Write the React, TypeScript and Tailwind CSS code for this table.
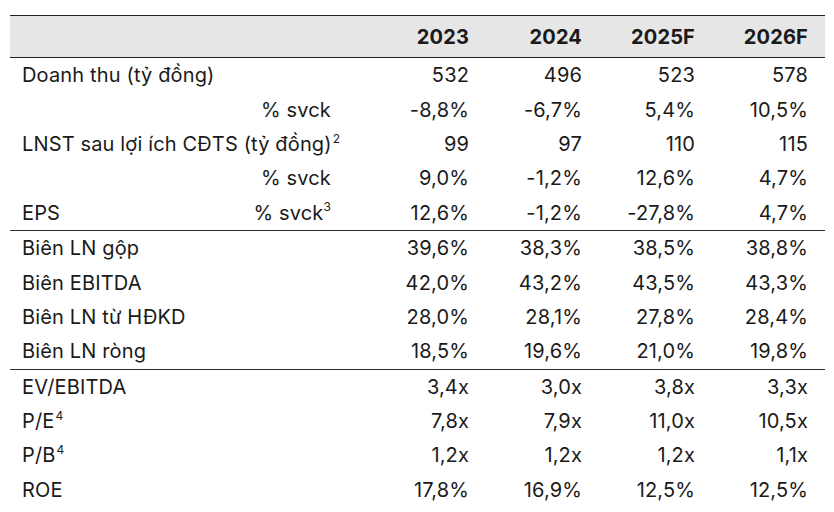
import React from 'react';

type Row = {
  label: string;
  sup?: string;
  sub?: string;
  subSup?: string;
  values: string[];
};

const groups: Row[][] = [
  [
    { label: 'Doanh thu (tỷ đồng)', values: ['532', '496', '523', '578'] },
    { label: '', sub: '% svck', values: ['-8,8%', '-6,7%', '5,4%', '10,5%'] },
    { label: 'LNST sau lợi ích CĐTS (tỷ đồng)', sup: '2', values: ['99', '97', '110', '115'] },
    { label: '', sub: '% svck', values: ['9,0%', '-1,2%', '12,6%', '4,7%'] },
    { label: 'EPS', sub: '% svck', subSup: '3', values: ['12,6%', '-1,2%', '-27,8%', '4,7%'] },
  ],
  [
    { label: 'Biên LN gộp', values: ['39,6%', '38,3%', '38,5%', '38,8%'] },
    { label: 'Biên EBITDA', values: ['42,0%', '43,2%', '43,5%', '43,3%'] },
    { label: 'Biên LN từ HĐKD', values: ['28,0%', '28,1%', '27,8%', '28,4%'] },
    { label: 'Biên LN ròng', values: ['18,5%', '19,6%', '21,0%', '19,8%'] },
  ],
  [
    { label: 'EV/EBITDA', values: ['3,4x', '3,0x', '3,8x', '3,3x'] },
    { label: 'P/E', sup: '4', values: ['7,8x', '7,9x', '11,0x', '10,5x'] },
    { label: 'P/B', sup: '4', values: ['1,2x', '1,2x', '1,2x', '1,1x'] },
    { label: 'ROE', values: ['17,8%', '16,9%', '12,5%', '12,5%'] },
  ],
];

const years = ['2023', '2024', '2025F', '2026F'];

const TableRow = ({ row }: { row: Row }) => (
  <div className="grid grid-cols-[346px_113px_113px_113px_113px] h-[34.4px] items-center">
    <div className="flex items-center h-full pl-[12px] pr-[25px]">
      <span className="whitespace-nowrap">
        {row.label}
        {row.sup && <sup className="text-[12px] ml-[1px] -top-[0.7em]">{row.sup}</sup>}
      </span>
      {row.sub && (
        <span className="ml-auto whitespace-nowrap">
          {row.sub}
          {row.subSup && <sup className="text-[12px] -top-[0.7em]">{row.subSup}</sup>}
        </span>
      )}
    </div>
    {row.values.map((v, i) => (
      <div key={i} className="text-right">{v}</div>
    ))}
  </div>
);

export default function App() {
  return (
    <div className="w-[834px] h-[512px] bg-white pt-[15px] pl-[10px] overflow-hidden text-[20px] text-[#1a1a1a] font-['Inter',sans-serif] leading-none tracking-[0.15px]">
      <div className="w-[815px]">
        <div className="grid grid-cols-[346px_113px_113px_113px_113px] h-[43px] items-center bg-[#e6e6e6] border-t-[1.5px] border-b-[1.5px] border-[#222] font-bold">
          <div />
          {years.map((y) => (
            <div key={y} className="text-right">{y}</div>
          ))}
        </div>
        {groups.map((g, gi) => (
          <div key={gi} className={gi < groups.length - 1 ? 'border-b-[1.5px] border-[#2e2e2e]' : ''}>
            {g.map((r, ri) => (
              <TableRow key={ri} row={r} />
            ))}
          </div>
        ))}
      </div>
    </div>
  );
}
